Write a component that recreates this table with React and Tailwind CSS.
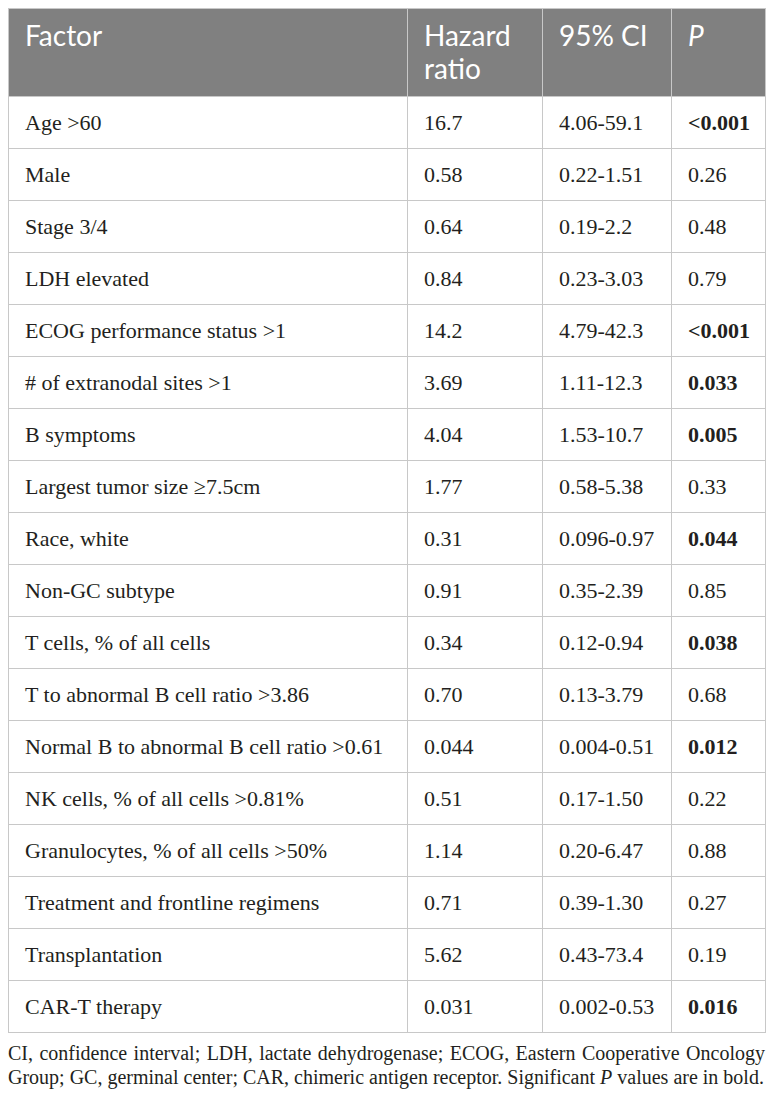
const rows = [
  ["Age >60", "16.7", "4.06-59.1", "<0.001", true],
  ["Male", "0.58", "0.22-1.51", "0.26", false],
  ["Stage 3/4", "0.64", "0.19-2.2", "0.48", false],
  ["LDH elevated", "0.84", "0.23-3.03", "0.79", false],
  ["ECOG performance status >1", "14.2", "4.79-42.3", "<0.001", true],
  ["# of extranodal sites >1", "3.69", "1.11-12.3", "0.033", true],
  ["B symptoms", "4.04", "1.53-10.7", "0.005", true],
  ["Largest tumor size ≥7.5cm", "1.77", "0.58-5.38", "0.33", false],
  ["Race, white", "0.31", "0.096-0.97", "0.044", true],
  ["Non-GC subtype", "0.91", "0.35-2.39", "0.85", false],
  ["T cells, % of all cells", "0.34", "0.12-0.94", "0.038", true],
  ["T to abnormal B cell ratio >3.86", "0.70", "0.13-3.79", "0.68", false],
  ["Normal B to abnormal B cell ratio >0.61", "0.044", "0.004-0.51", "0.012", true],
  ["NK cells, % of all cells >0.81%", "0.51", "0.17-1.50", "0.22", false],
  ["Granulocytes, % of all cells >50%", "1.14", "0.20-6.47", "0.88", false],
  ["Treatment and frontline regimens", "0.71", "0.39-1.30", "0.27", false],
  ["Transplantation", "5.62", "0.43-73.4", "0.19", false],
  ["CAR-T therapy", "0.031", "0.002-0.53", "0.016", true],
];

export default function App() {
  return (
    <div className="bg-white min-h-screen pl-2 pt-2 pr-[7px]">
      <table className="w-[757px] table-fixed border-collapse">
        <colgroup>
          <col className="w-[399px]" />
          <col className="w-[135px]" />
          <col className="w-[129px]" />
          <col className="w-[94px]" />
        </colgroup>
        <thead>
          <tr className="bg-[#808080] text-white text-[28px] leading-[33px] font-['Lato',sans-serif]">
            <th className="border border-[#c8c8c8] px-4 pt-[10px] pb-[11px] text-left align-top font-normal">Factor</th>
            <th className="border border-[#c8c8c8] px-4 pt-[10px] pb-[11px] text-left align-top font-normal">Hazard ratio</th>
            <th className="border border-[#c8c8c8] px-4 pt-[10px] pb-[11px] text-left align-top font-normal">95% CI</th>
            <th className="border border-[#c8c8c8] px-4 pt-[10px] pb-[11px] text-left align-top font-normal italic">P</th>
          </tr>
        </thead>
        <tbody className="font-['Liberation_Serif',serif] text-[22px] leading-[26px] text-[#231f20]">
          {rows.map(([f, hr, ci, p, sig]) => (
            <tr key={f} className="h-[52px]">
              <td className="border border-[#c8c8c8] px-4 align-middle whitespace-nowrap">{f}</td>
              <td className="border border-[#c8c8c8] px-4 align-middle">{hr}</td>
              <td className="border border-[#c8c8c8] px-4 align-middle">{ci}</td>
              <td className={"border border-[#c8c8c8] px-4 align-middle" + (sig ? " font-bold" : "")}>{p}</td>
            </tr>
          ))}
        </tbody>
      </table>
      <div className="w-[757px] mt-[8px] font-['Liberation_Serif',serif] text-[20px] leading-[24px] text-[#231f20]">
        <p className="text-justify [text-align-last:justify] whitespace-nowrap">
          CI, confidence interval; LDH, lactate dehydrogenase; ECOG, Eastern Cooperative Oncology
        </p>
        <p className="whitespace-nowrap">
          Group; GC, germinal center; CAR, chimeric antigen receptor. Significant <i>P</i> values are in bold.
        </p>
      </div>
    </div>
  );
}
